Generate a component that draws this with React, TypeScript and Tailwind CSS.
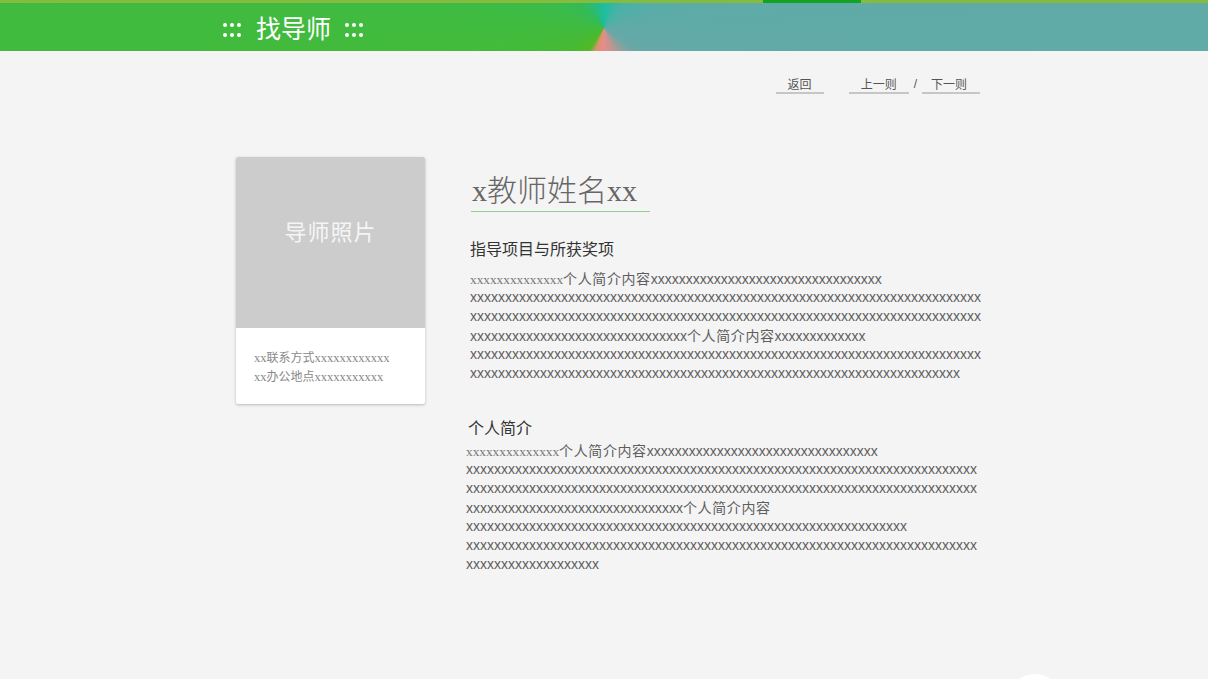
import React from 'react';

const x = (n: number) => 'x'.repeat(n);

function Small({ n }: { n: number }) {
  return <span className="font-['Liberation_Serif','Noto_Sans_CJK_SC',serif] text-[13.3px] text-[#777]">{x(n)}</span>;
}

function Cjk({ children }: { children: React.ReactNode }) {
  return <span className="font-['Noto_Sans_CJK_SC',sans-serif] tracking-[0.6px]">{children}</span>;
}

function BodyLines({ lines }: { lines: React.ReactNode[] }) {
  return (
    <div className="text-[14px] leading-[19px] text-[#5e5e5e] font-['Liberation_Sans','Noto_Sans_CJK_SC',sans-serif] whitespace-nowrap">
      {lines.map((l, i) => (
        <div key={i} className="h-[19px]">{l}</div>
      ))}
    </div>
  );
}

function Dots() {
  return (
    <span className="grid grid-cols-3 gap-x-[3px] gap-y-[6px] pt-[5px]">
      {Array.from({ length: 6 }).map((_, i) => (
        <span key={i} className="h-[4px] w-[4px] rounded-full bg-white" />
      ))}
    </span>
  );
}

export default function App() {
  const awards = [
    <><Small n={14} /><Cjk>个人简介内容</Cjk>{x(33)}</>,
    <>{x(73)}</>,
    <>{x(73)}</>,
    <>{x(31)}<Cjk>个人简介内容</Cjk>{x(13)}</>,
    <>{x(73)}</>,
    <>{x(70)}</>,
  ];
  const intro = [
    <><Small n={14} /><Cjk>个人简介内容</Cjk>{x(33)}</>,
    <>{x(73)}</>,
    <>{x(73)}</>,
    <>{x(31)}<Cjk>个人简介内容</Cjk></>,
    <>{x(63)}</>,
    <>{x(73)}</>,
    <>{x(19)}</>,
  ];

  return (
    <div className="relative h-[679px] overflow-hidden bg-[#f4f4f4] font-['Noto_Sans_CJK_SC',sans-serif]">
      {/* top strip */}
      <div className="flex h-[3px] bg-[#86bc3d]">
        <div className="w-[763px]" />
        <div className="w-[98px] bg-[#12a323]" />
      </div>
      <header className="flex h-[48px] items-center pl-[223px] text-white bg-[conic-gradient(from_0deg_at_604px_25px,#1cbda0_0deg,#45b3a6_35deg,#5eaba8_80deg,#68a8a7_125deg,#c4948f_160deg,#e88c86_182deg,#d8946f_200deg,#52b826_214deg,#45ba35_245deg,#41bb3e_270deg,#33bb58_315deg,#1cbda0_360deg)]">
        <Dots />
        <span className="ml-[15px] text-[25px] leading-none">找导师</span>
        <span className="ml-[14px]">
          <Dots />
        </span>
      </header>

      {/* nav links */}
      <div className="mt-[25px] flex justify-end pr-[228px] text-[12px] leading-[16px] text-[#555]">
        <a className="border-b-2 border-[#c6c6c6] px-[12px]">返回</a>
        <a className="ml-[25px] border-b-2 border-[#c6c6c6] px-[12px]">上一则</a>
        <span className="mx-[5px] font-['Liberation_Sans',sans-serif]">/</span>
        <a className="border-b-2 border-[#c6c6c6] pl-[9px] pr-[13px]">下一则</a>
      </div>

      <main className="ml-[236px] mt-[63px] flex items-start">
        <div className="w-[189px] overflow-hidden rounded-[2px] bg-white shadow-[0_1px_3px_rgba(0,0,0,0.25)]">
          <div className="flex h-[171px] items-center justify-center bg-[#cccccc] pb-[24px] text-[22px] tracking-[1px] text-[#f5f5f5]">
            导师照片
          </div>
          <div className="px-[18px] pt-[19px] pb-[19px] text-[12px] leading-[19px] text-[#888]">
            <div className="h-[19px]"><span className="font-['Liberation_Serif',serif] text-[12.5px]">xx</span>联系方式<span className="font-['Liberation_Serif',serif] text-[12.5px]">xxxxxxxxxxxx</span></div>
            <div className="h-[19px]"><span className="font-['Liberation_Serif',serif] text-[12.5px]">xx</span>办公地点<span className="font-['Liberation_Serif',serif] text-[12.5px]">xxxxxxxxxxx</span></div>
          </div>
        </div>

        <div className="ml-[45px]">
          <div className="ml-[1px] mt-[11px] inline-block w-[179px] border-b border-[#8dd294] text-[30px] font-light leading-[41px] text-[#666]">
            <span className="font-['Liberation_Serif',serif] ml-[1px]">x</span>教师姓名<span className="font-['Liberation_Serif',serif]">xx</span>
          </div>

          <h2 className="mt-[26px] text-[16px] leading-[20px] text-[#333]">指导项目与所获奖项</h2>
          <div className="mt-[11px]">
            <BodyLines lines={awards} />
          </div>

          <h2 className="-ml-[2px] mt-[34px] text-[16px] leading-[20px] text-[#333]">个人简介</h2>
          <div className="-ml-[4px] mt-[4px]">
            <BodyLines lines={intro} />
          </div>
        </div>
      </main>

      {/* floating round button peeking at bottom */}
      <div className="absolute left-[1008px] top-[674px] h-[54px] w-[54px] rounded-full bg-white" />
    </div>
  );
}
